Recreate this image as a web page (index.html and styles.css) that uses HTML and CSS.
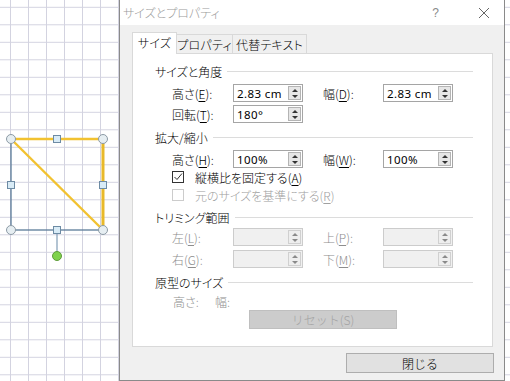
FILE: index.html
```html
<!DOCTYPE html>
<html lang="ja">
<head>
  <meta charset="UTF-8">
  <title>サイズとプロパティ</title>
  <link rel="stylesheet" href="styles.css">
</head>
<body>
  <svg class="shape" width="119" height="270" viewBox="0 0 119 270">
    <rect x="11" y="139" width="92" height="91" fill="none" stroke="#5b7b99" stroke-width="1.3"/>
    <line x1="11" y1="139" x2="103" y2="139" stroke="#f2c230" stroke-width="2.4"/>
    <line x1="103" y1="139" x2="103" y2="230" stroke="#e8b92a" stroke-width="3"/>
    <line x1="11" y1="139" x2="103" y2="230" stroke="#f2c230" stroke-width="2.4"/>
    <line x1="57" y1="230" x2="57" y2="256" stroke="#8aa5bc" stroke-width="1.3"/>
    <circle cx="11" cy="139" r="4.5" fill="#e6eef2" stroke="#8c9aa5"/>
    <circle cx="103" cy="139" r="4.5" fill="#e6eef2" stroke="#8c9aa5"/>
    <circle cx="11" cy="230" r="4.5" fill="#e6eef2" stroke="#8c9aa5"/>
    <circle cx="103" cy="230" r="4.5" fill="#e6eef2" stroke="#8c9aa5"/>
    <rect x="53.5" y="135.5" width="7" height="7" fill="#d8ebf6" stroke="#6d8ba4"/>
    <rect x="7.5" y="181.5" width="7" height="7" fill="#d8ebf6" stroke="#6d8ba4"/>
    <rect x="99.5" y="181.5" width="7" height="7" fill="#d8ebf6" stroke="#6d8ba4"/>
    <rect x="53.5" y="226.5" width="7" height="7" fill="#d8ebf6" stroke="#6d8ba4"/>
    <circle cx="57" cy="256" r="4.5" fill="#7fd24c" stroke="#5f9c3c"/>
  </svg>

  <div class="window">
    <div class="titlebar">
      <span class="title">サイズとプロパティ</span>
      <span class="help">?</span>
      <svg class="close-x" width="12" height="12" viewBox="0 0 12 12">
        <path d="M1 1 L11 11 M11 1 L1 11" stroke="#666" stroke-width="1" fill="none"/>
      </svg>
    </div>

    <div class="body">
      <div class="tabs">
        <div class="tab active">サイズ</div>
        <div class="tab tab-prop">プロパティ</div>
        <div class="tab tab-alt">代替テキスト</div>
      </div>

      <div class="panel">
        <!-- サイズと角度 -->
        <div class="section-title s1">サイズと角度</div>
        <div class="row r1">
          <span class="label">高さ(<u>E</u>):</span>
          <div class="field"><span class="val">2.83 cm</span><span class="spin"><i class="up"></i><i class="down"></i></span></div>
          <span class="label label2">幅(<u>D</u>):</span>
          <div class="field"><span class="val">2.83 cm</span><span class="spin"><i class="up"></i><i class="down"></i></span></div>
        </div>
        <div class="row r2">
          <span class="label">回転(<u>T</u>):</span>
          <div class="field"><span class="val">180°</span><span class="spin"><i class="up"></i><i class="down"></i></span></div>
        </div>

        <!-- 拡大/縮小 -->
        <div class="section-title s2">拡大/縮小</div>
        <div class="row r3">
          <span class="label">高さ(<u>H</u>):</span>
          <div class="field"><span class="val">100%</span><span class="spin"><i class="up"></i><i class="down"></i></span></div>
          <span class="label label2">幅(<u>W</u>):</span>
          <div class="field"><span class="val">100%</span><span class="spin"><i class="up"></i><i class="down"></i></span></div>
        </div>
        <div class="check-row">
          <span class="check checked">
            <svg width="10" height="10" viewBox="0 0 10 10"><path d="M1.5 5 L4 7.5 L9 1.5" stroke="#333" stroke-width="1" fill="none"/></svg>
          </span>
          <span>縦横比を固定する(<u>A</u>)</span>
        </div>
        <div class="check-row disabled">
          <span class="check"></span>
          <span>元のサイズを基準にする(<u>R</u>)</span>
        </div>

        <!-- トリミング範囲 -->
        <div class="section-title s3">トリミング範囲</div>
        <div class="row r4 disabled">
          <span class="label">左(<u>L</u>):</span>
          <div class="field"><span class="val"></span><span class="spin"><i class="up"></i><i class="down"></i></span></div>
          <span class="label label2">上(<u>P</u>):</span>
          <div class="field"><span class="val"></span><span class="spin"><i class="up"></i><i class="down"></i></span></div>
        </div>
        <div class="row r5 disabled">
          <span class="label">右(<u>G</u>):</span>
          <div class="field"><span class="val"></span><span class="spin"><i class="up"></i><i class="down"></i></span></div>
          <span class="label label2">下(<u>M</u>):</span>
          <div class="field"><span class="val"></span><span class="spin"><i class="up"></i><i class="down"></i></span></div>
        </div>

        <!-- 原型のサイズ -->
        <div class="section-title s4">原型のサイズ</div>
        <div class="orig-row">
          <span class="orig-h">高さ:</span>
          <span>幅:</span>
        </div>
        <div class="reset-row">
          <button class="reset" disabled>リセット(S)</button>
        </div>
      </div>

      <div class="footer">
        <button class="btn">閉じる</button>
      </div>
    </div>
  </div>
</body>
</html>
```

FILE: styles.css
```css
* {
  margin: 0;
  padding: 0;
  box-sizing: border-box;
}

body {
  width: 510px;
  height: 381px;
  overflow: hidden;
  font-family: "Noto Sans CJK JP", sans-serif;
  font-size: 12px;
  font-weight: 300;
  font-feature-settings: "palt";
  color: #000;
  background-color: #fff;
  background-image:
    repeating-linear-gradient(to right, transparent 0 10px, #d3d3e0 10px 11px, transparent 11px 18px),
    repeating-linear-gradient(to bottom, transparent 0 7px, #d3d3e0 7px 8px, transparent 8px 17.5px);
  background-size: 18px 100%, 100% 17.5px;
  position: relative;
}

.shape {
  position: absolute;
  left: 0;
  top: 0;
}

.window {
  position: absolute;
  left: 119px;
  top: 0;
  width: 386px;
  height: 381px;
  border: 1px solid #8a8a8a;
  border-top: none;
  background-color: #f0f0f0;
  display: flex;
  flex-direction: column;
}

.titlebar {
  height: 25px;
  background-color: #fff;
  display: flex;
  align-items: center;
  padding-left: 3px;
}

.title {
  color: #9a9a9a;
  font-size: 12px;
  flex: 1;
}

.help {
  color: #8a8a8a;
  font-family: "Liberation Sans", sans-serif;
  font-size: 12px;
  margin-right: 39px;
}

.close-x {
  margin-right: 14px;
}

.body {
  flex: 1;
  padding: 0 11px 0 12px;
  display: flex;
  flex-direction: column;
}

.tabs {
  display: flex;
  align-items: flex-end;
  height: 21px;
  margin-top: 7px;
}

.tab {
  height: 19px;
  border: 1px solid #d9d9d9;
  border-bottom: none;
  display: flex;
  align-items: center;
  justify-content: center;
  margin-left: -1px;
  width: 57px;
  background-color: #f0f0f0;
  white-space: nowrap;
  letter-spacing: 0.2px;
}

.tab.active {
  width: 45px;
  margin-left: 0;
  height: 22px;
  margin-bottom: -1px;
  background-color: #fff;
  position: relative;
  z-index: 1;
  padding-bottom: 2px;
}

.tab-alt {
  width: 75px;
}

.panel {
  height: 294px;
  border: 1px solid #d9d9d9;
  background-color: #fff;
  padding-top: 9px;
}

.section-title {
  height: 16px;
  display: flex;
  align-items: center;
  padding-left: 22px;
  padding-right: 19px;
}

.section-title::after {
  content: "";
  flex: 1;
  height: 1px;
  background-color: #dcdcdc;
  margin-left: 5px;
}

.s2 { margin-top: 6px; }
.s3 { margin-top: 5px; }
.s4 { margin-top: 6px; }

.row {
  height: 18px;
  display: flex;
  align-items: center;
  padding-left: 39px;
}

.r1 { margin-top: 5px; }
.r2 { margin-top: 3px; }
.r3 { margin-top: 5px; }
.r4 { margin-top: 3px; }
.r5 { margin-top: 4px; }

.label {
  width: 61px;
}

.label2 {
  width: 60px;
  margin-left: 20px;
}

u {
  text-decoration-thickness: 1px;
  text-underline-offset: 2px;
}

.field {
  width: 70px;
  height: 18px;
  border: 1px solid #a5a5a5;
  background-color: #fff;
  display: flex;
  align-items: center;
  padding: 0 1px 0 3px;
}

.val {
  flex: 1;
  font-family: "Noto Sans", sans-serif;
  font-size: 11.5px;
  font-weight: 400;
  letter-spacing: 0.4px;
}

.spin {
  width: 13px;
  height: 14px;
  border: 1px solid #b4b4b4;
  background-color: #e6e6e6;
  display: flex;
  flex-direction: column;
  align-items: center;
  justify-content: space-around;
}

.spin .up,
.spin .down {
  width: 0;
  height: 0;
  border-left: 3px solid transparent;
  border-right: 3px solid transparent;
}

.spin .up {
  border-bottom: 3px solid #333;
}

.spin .down {
  border-top: 3px solid #333;
}

.disabled {
  color: #8d8d8d;
}

.disabled .field {
  background-color: #f0f0f0;
  border-color: #cccccc;
}

.disabled .spin {
  border-color: #d0d0d0;
  background-color: #eeeeee;
}

.disabled .spin .up {
  border-bottom-color: #8a8a8a;
}

.disabled .spin .down {
  border-top-color: #8a8a8a;
}

.check-row {
  height: 18px;
  display: flex;
  align-items: center;
  padding-left: 39px;
}

.check {
  width: 12px;
  height: 12px;
  border: 1px solid #cccccc;
  background-color: #fff;
  margin-right: 11px;
  display: flex;
  align-items: center;
  justify-content: center;
}

.check.checked {
  border-color: #333;
}

.check-row.disabled {
  color: #a0a0a0;
}

.orig-row {
  height: 16px;
  margin-top: 3px;
  display: flex;
  align-items: center;
  padding-left: 40px;
  color: #8d8d8d;
}

.orig-h {
  width: 42px;
}

.reset-row {
  margin-top: 1px;
  padding-left: 116px;
}

.reset {
  width: 148px;
  height: 19px;
  border: 1px solid #bfbfbf;
  background-color: #cccccc;
  color: #a3a3a3;
  font-family: inherit;
  font-weight: inherit;
  font-size: 12px;
}

.footer {
  display: flex;
  justify-content: flex-end;
  margin-top: 6px;
  margin-right: -1px;
}

.btn {
  width: 148px;
  height: 20px;
  border: 1px solid #adadad;
  background-color: #e1e1e1;
  font-family: inherit;
  font-weight: inherit;
  font-size: 12px;
  color: #000;
}
```
